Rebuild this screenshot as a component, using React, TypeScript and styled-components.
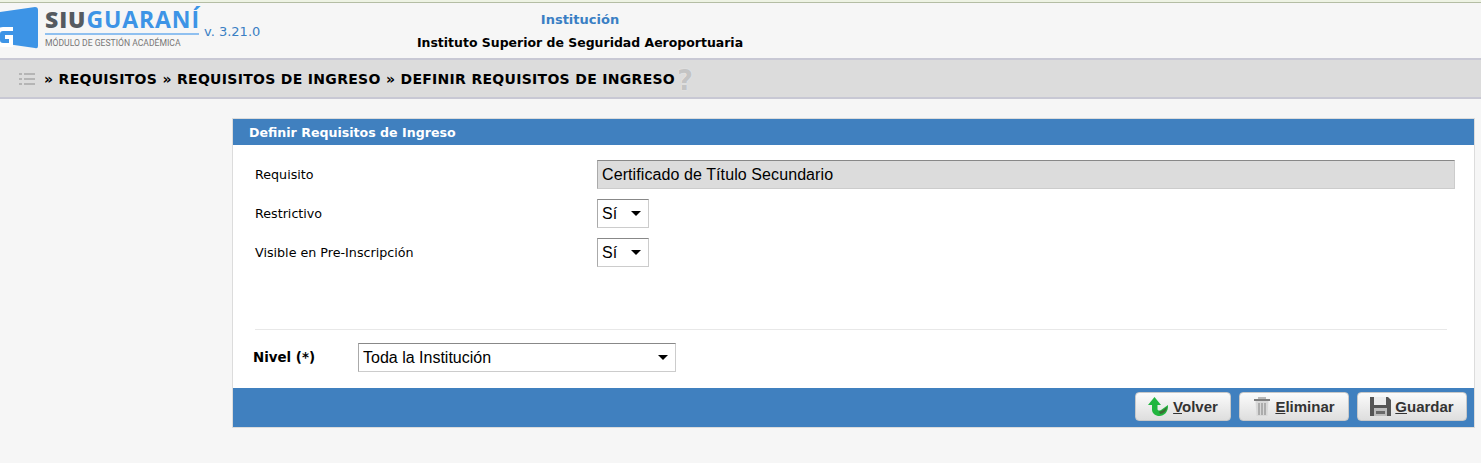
import React from 'react';
import styled, { createGlobalStyle } from 'styled-components';

const GlobalStyle = createGlobalStyle`
  html, body {
    margin: 0;
    padding: 0;
    background: #f6f6f6;
    font-family: Verdana, "DejaVu Sans", sans-serif;
    color: #000;
  }
`;

const Page = styled.div`
  width: 1481px;
  height: 463px;
  overflow: hidden;
  background: #f6f6f6;
  display: flex;
  flex-direction: column;
`;

const TopLine = styled.div`
  height: 3px;
  box-sizing: border-box;
  background: #eef3e4;
  border-bottom: 1px solid #b4bda4;
`;

const Header = styled.header`
  height: 55px;
  display: flex;
  flex-shrink: 0;
`;

const LogoArea = styled.div`
  width: 400px;
  display: flex;
  align-items: flex-start;
  padding-top: 3px;
`;

const LogoMark = styled.div`
  width: 39px;
  height: 43px;
  display: flex;
  align-items: flex-end;
  overflow: hidden;
`;

const LogoText = styled.div`
  margin-left: 6px;
  width: 154px;
  display: flex;
  flex-direction: column;
`;

const LogoName = styled.div`
  font-family: "Open Sans", "Liberation Sans", sans-serif;
  font-weight: 800;
  font-size: 23px;
  line-height: 27px;
  height: 27px;
  letter-spacing: 0.9px;
  white-space: nowrap;
  color: #555a60;
  border-bottom: 2px solid #8fc0f0;
`;

const LogoBlue = styled.span`
  color: #3d94e6;
  font-weight: 700;
`;

const LogoSub = styled.div`
  font-family: Roboto, "Liberation Sans", sans-serif;
  font-size: 8.6px;
  line-height: 12px;
  margin-top: 2px;
  color: #777;
  white-space: nowrap;
`;

const Version = styled.div`
  margin: 18px 0 0 5px;
  font-size: 13px;
  line-height: 16px;
  color: #3a7fc4;
`;

const Institution = styled.div`
  width: 360px;
  display: flex;
  flex-direction: column;
  align-items: center;
  font-weight: bold;
  padding-top: 9px;
`;

const InstitutionLabel = styled.div`
  color: #3a7fc4;
  font-size: 13px;
  line-height: 15px;
`;

const InstitutionName = styled.div`
  margin-top: 8px;
  line-height: 15px;
  font-size: 12.47px;
  white-space: nowrap;
`;

const Breadcrumb = styled.nav`
  height: 41px;
  box-sizing: border-box;
  background: #dcdcdc;
  border-top: 2px solid #c8c8d4;
  border-bottom: 2px solid #c8c8d4;
  display: flex;
  align-items: center;
  padding-left: 19px;
  font-weight: bold;
  font-size: 14px;
  white-space: nowrap;
`;

const BreadcrumbText = styled.span`
  margin-left: 9px;
  letter-spacing: 0.29px;
  word-spacing: 0.1px;
`;

const HelpMark = styled.span`
  margin: 5px 0 0 2px;
  font-size: 28px;
  line-height: 28px;
  font-weight: bold;
  color: #c4c4c4;
  text-shadow: 0 0 1px #fff;
`;

const Panel = styled.section`
  margin: 19px 0 0 232px;
  width: 1243px;
  height: 310px;
  box-sizing: border-box;
  border: 1px solid #dcdcdc;
  background: #fff;
  display: flex;
  flex-direction: column;
`;

const PanelTitle = styled.div`
  height: 26px;
  flex-shrink: 0;
  background: #4080bf;
  color: #fff;
  font-weight: bold;
  font-size: 12.6px;
  line-height: 27px;
  padding-left: 16px;
`;

const PanelBody = styled.div`
  flex: 1;
  padding: 15px 19px 0 22px;
  display: flex;
  flex-direction: column;
`;

const FormRow = styled.div`
  height: 29px;
  margin-bottom: 10px;
  display: flex;
  align-items: center;
  font-size: 12.7px;
`;

const FormLabel = styled.label`
  width: 342px;
  flex-shrink: 0;
`;

const ReadOnlyField = styled.div`
  width: 858px;
  height: 29px;
  box-sizing: border-box;
  background: #dcdcdc;
  border: 1px solid #ccc;
  border-top-color: #888;
  border-left-color: #aaa;
  font-family: "Liberation Sans", Arial, sans-serif;
  font-size: 16px;
  letter-spacing: 0.09px;
  line-height: 27px;
  padding-left: 4px;
`;

const SelectWrap = styled.div<{ $width: number }>`
  position: relative;
  width: ${({ $width }) => $width}px;
  height: 29px;
  &::after {
    content: '';
    position: absolute;
    right: 8px;
    top: 12px;
    border-left: 5px solid transparent;
    border-right: 5px solid transparent;
    border-top: 5px solid #000;
    pointer-events: none;
  }
`;

const Select = styled.select`
  appearance: none;
  width: 100%;
  height: 100%;
  box-sizing: border-box;
  background: #fff;
  border: 1px solid #ccc;
  border-top-color: #888;
  border-left-color: #aaa;
  border-radius: 0;
  font-family: "Liberation Sans", Arial, sans-serif;
  font-size: 16px;
  color: #000;
  padding: 0 0 0 4px;
`;

const Divider = styled.hr`
  margin: 52px 8px 13px 0;
  border: 0;
  border-top: 1px solid #e8e8e8;
`;

const LevelRow = styled.div`
  display: flex;
  align-items: center;
  margin-left: -2px;
  height: 29px;
`;

const LevelLabel = styled.label`
  width: 105px;
  flex-shrink: 0;
  font-size: 13.4px;
  font-weight: bold;
`;

const PanelFooter = styled.div`
  height: 39px;
  box-sizing: border-box;
  flex-shrink: 0;
  background: #4080bf;
  display: flex;
  justify-content: flex-end;
  align-items: flex-start;
  gap: 8px;
  padding: 4px 7px 0 0;
`;

const ActionButton = styled.button<{ $width: number }>`
  width: ${({ $width }) => $width}px;
  height: 29px;
  box-sizing: border-box;
  border: 1px solid #c8c8c8;
  border-radius: 4px;
  background: linear-gradient(#fbfbfb, #dedede);
  display: flex;
  align-items: center;
  justify-content: center;
  gap: 4px;
  padding: 0;
  font-family: "Liberation Sans", Arial, sans-serif;
  font-weight: bold;
  font-size: 15px;
  color: #333;
`;

const HotKey = styled.span`
  text-decoration: underline;
`;

const ArrowIcon = () => (
  <svg width="21" height="20" viewBox="0 0 21 20">
    <path d="M6.5 0 L13 8 L9.5 8 L9.5 12 C9.5 13.5 11 14 13 13 L20 8 C20.5 15 16 19 11.5 19 C7.5 19 4 16.5 4 12.5 L4 8 L0 8 Z" fill="#21b63f" />
    <path d="M11 14.5 C13 14.5 16 12.5 19 10 C18.5 14 15.5 17 12 17 Z" fill="#3d6b34" />
  </svg>
);

const TrashIcon = () => (
  <svg width="18" height="21" viewBox="0 0 18 21">
    <rect x="5" y="1" width="8" height="2" fill="#b8b8b8" />
    <rect x="1" y="3" width="16" height="2" fill="#7d7d7d" />
    <path d="M2.5 5 H15.5 L14.5 20 H3.5 Z" fill="#d8d8d8" />
    <path d="M6 7 V19 M9 7 V19 M12 7 V19" stroke="#9a9a9a" strokeWidth="1.4" />
  </svg>
);

const SaveIcon = () => (
  <svg width="21" height="21" viewBox="0 0 21 21">
    <path d="M0 1 H18 L21 4 V20 H0 Z" fill="#565656" />
    <rect x="4" y="1" width="12" height="8" fill="#ececec" />
    <rect x="4" y="12" width="13" height="8" fill="#bdbdbd" />
    <rect x="6" y="15" width="9" height="3" fill="#6a6a6a" />
  </svg>
);

const ListIcon = () => (
  <svg width="16" height="14" viewBox="0 0 16 14">
    <path d="M0 2 H3 M5 2 H16 M0 7 H3 M5 7 H16 M0 12 H3 M5 12 H16" stroke="#b5b5b5" strokeWidth="2" />
  </svg>
);

const LogoIcon = () => (
  <svg width="39" height="43" viewBox="0 0 39 43">
    <path d="M0 6 L35 1 Q38 1 38 4 L38 40 Q38 43 35 42 L0 37 Z" fill="#3d94e6" />
    <path d="M13 23 H3 Q-2 23 -2 28 V34 Q-2 39 3 39 H11 V31 H5" fill="none" stroke="#fff" strokeWidth="4" />
  </svg>
);

const App: React.FC = () => {
  return (
    <Page>
      <GlobalStyle />
      <TopLine />
      <Header>
        <LogoArea>
          <LogoMark>
            <LogoIcon />
          </LogoMark>
          <LogoText>
            <LogoName>
              SIU<LogoBlue>GUARANÍ</LogoBlue>
            </LogoName>
            <LogoSub>MÓDULO DE GESTIÓN ACADÉMICA</LogoSub>
          </LogoText>
          <Version>v. 3.21.0</Version>
        </LogoArea>
        <Institution>
          <InstitutionLabel>Institución</InstitutionLabel>
          <InstitutionName>Instituto Superior de Seguridad Aeroportuaria</InstitutionName>
        </Institution>
      </Header>
      <Breadcrumb>
        <ListIcon />
        <BreadcrumbText>» REQUISITOS » REQUISITOS DE INGRESO » DEFINIR REQUISITOS DE INGRESO</BreadcrumbText>
        <HelpMark>?</HelpMark>
      </Breadcrumb>
      <Panel>
        <PanelTitle>Definir Requisitos de Ingreso</PanelTitle>
        <PanelBody>
          <FormRow>
            <FormLabel>Requisito</FormLabel>
            <ReadOnlyField>Certificado de Título Secundario</ReadOnlyField>
          </FormRow>
          <FormRow>
            <FormLabel>Restrictivo</FormLabel>
            <SelectWrap $width={52}>
              <Select defaultValue="si">
                <option value="si">Sí</option>
                <option value="no">No</option>
              </Select>
            </SelectWrap>
          </FormRow>
          <FormRow>
            <FormLabel>Visible en Pre-Inscripción</FormLabel>
            <SelectWrap $width={52}>
              <Select defaultValue="si">
                <option value="si">Sí</option>
                <option value="no">No</option>
              </Select>
            </SelectWrap>
          </FormRow>
          <Divider />
          <LevelRow>
            <LevelLabel>Nivel (*)</LevelLabel>
            <SelectWrap $width={318}>
              <Select defaultValue="all">
                <option value="all">Toda la Institución</option>
              </Select>
            </SelectWrap>
          </LevelRow>
        </PanelBody>
        <PanelFooter>
          <ActionButton $width={96}>
            <ArrowIcon />
            <span><HotKey>V</HotKey>olver</span>
          </ActionButton>
          <ActionButton $width={110}>
            <TrashIcon />
            <span><HotKey>E</HotKey>liminar</span>
          </ActionButton>
          <ActionButton $width={110}>
            <SaveIcon />
            <span><HotKey>G</HotKey>uardar</span>
          </ActionButton>
        </PanelFooter>
      </Panel>
    </Page>
  );
};

export default App;
